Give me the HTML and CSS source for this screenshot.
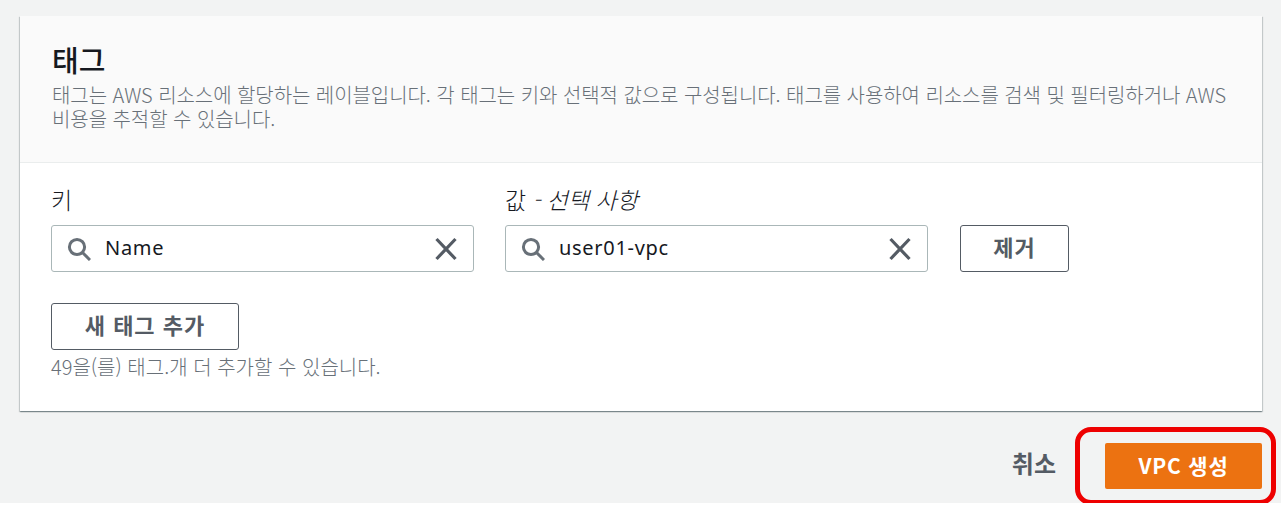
FILE: index.html
```html
<!DOCTYPE html>
<html lang="ko">
<head>
<meta charset="utf-8">
<title>태그</title>
<link rel="stylesheet" href="styles.css">
</head>
<body>
<div class="page">
  <section class="card">
    <header class="card-head">
      <h2 class="title">태그</h2>
      <p class="desc">태그는 AWS 리소스에 할당하는 레이블입니다. 각 태그는 키와 선택적 값으로 구성됩니다. 태그를 사용하여 리소스를 검색 및 필터링하거나 AWS 비용을 추적할 수 있습니다.</p>
    </header>
    <div class="card-body">
      <div class="tag-row">
        <div class="field">
          <div class="label">키</div>
          <div class="input">
            <svg class="ic-search" viewBox="0 0 24 24" width="24" height="24"><circle cx="10" cy="10" r="7.6" fill="none" stroke="#687078" stroke-width="3"/><path d="M15.5 15.5L23 23" stroke="#687078" stroke-width="3" fill="none"/></svg>
            <span class="value">Name</span>
            <svg class="ic-x" viewBox="0 0 24 24" width="24" height="24"><path d="M2.5 2L21.5 22M21.5 2L2.5 22" stroke="#545b64" stroke-width="3.2" fill="none"/></svg>
          </div>
        </div>
        <div class="field">
          <div class="label"><span>값</span> <i>- 선택 사항</i></div>
          <div class="input">
            <svg class="ic-search" viewBox="0 0 24 24" width="24" height="24"><circle cx="10" cy="10" r="7.6" fill="none" stroke="#687078" stroke-width="3"/><path d="M15.5 15.5L23 23" stroke="#687078" stroke-width="3" fill="none"/></svg>
            <span class="value">user01-vpc</span>
            <svg class="ic-x" viewBox="0 0 24 24" width="24" height="24"><path d="M2.5 2L21.5 22M21.5 2L2.5 22" stroke="#545b64" stroke-width="3.2" fill="none"/></svg>
          </div>
        </div>
        <button class="btn btn-remove">제거</button>
      </div>
      <button class="btn btn-add">새 태그 추가</button>
      <p class="hint">49을(를) 태그.개 더 추가할 수 있습니다.</p>
    </div>
  </section>
  <footer class="actions">
    <button class="cancel">취소</button>
    <div class="highlight-wrap">
      <button class="primary">VPC 생성</button>
      <div class="ring"></div>
    </div>
  </footer>
</div>
</body>
</html>
```
FILE: styles.css
```css
* { box-sizing: border-box; }
html, body { margin: 0; padding: 0; background: #fff; }
body { font-family: "Noto Sans CJK KR", "Noto Sans", sans-serif; overflow: hidden; }
.page { height: 503px; background: #f2f3f3; padding: 16px 19px 0 20px; }
.card { height: 395px; background: #fff; box-shadow: 0 1px 1px 0 rgba(0,28,36,.3), 1px 1px 1px 0 rgba(0,28,36,.15), -1px 1px 1px 0 rgba(0,28,36,.15); }
.card-head { height: 147px; background: #fafafa; border-bottom: 1px solid #eaeded; padding: 23px 32px 0; }
.title { margin: 0; font-size: 29px; line-height: 40px; font-weight: 500; color: #16191f; }
.desc { margin: 4px 0 0; font-size: 20px; line-height: 24px; font-weight: 300; color: #687078; letter-spacing: -.07px; }
.card-body { padding: 19px 31px 0; }
.tag-row { display: flex; align-items: flex-end; gap: 31px; }
.field { width: 423px; }
.label { font-size: 23px; line-height: 34px; height: 43px; font-weight: 300; color: #16191f; }
.label i { font-style: italic; }
.input { display: flex; align-items: center; height: 47px; background: #fff; border: 1px solid #aab7b8; border-radius: 3px; padding: 0 15px 0 15px; }
.value { flex: 1; margin-left: 14px; padding-bottom: 2px; font-family: "Noto Sans", sans-serif; font-size: 20px; letter-spacing: .7px; color: #16191f; }
.ic-search, .ic-x { flex: none; }
.btn { display: block; height: 47px; background: #fff; border: 1px solid #545b64; border-radius: 3px; font-family: inherit; font-size: 22px; line-height: 38px; font-weight: 700; color: #545b64; letter-spacing: 1px; padding: 0 0 6px; }
.btn-remove { width: 109px; margin-left: 1px; }
.btn-add { width: 188px; margin-top: 31px; }
.hint { margin: 2px 0 0; font-size: 20px; line-height: 30px; color: #687078; font-weight: 300; }
.actions { display: flex; justify-content: flex-end; align-items: center; height: 92px; }
.cancel { background: none; border: 0; padding: 0; margin-right: 49px; margin-top: 10px; font-family: inherit; font-size: 24px; font-weight: 700; color: #545b64; }
.highlight-wrap { position: relative; margin-top: 18px; }
.primary { display: block; width: 157px; height: 46px; background: #ec7211; border: 0; border-radius: 2px; color: #fff; font-family: inherit; font-size: 21px; font-weight: 700; padding: 0 0 2px; letter-spacing: .8px; }
.ring { position: absolute; left: -30px; top: -16px; width: 201px; height: 78px; border: 5px solid #ee0000; border-radius: 16px; }
```
